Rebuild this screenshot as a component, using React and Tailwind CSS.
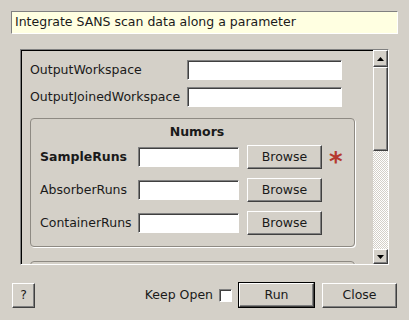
const font = { fontFamily: '"DejaVu Sans", "Liberation Sans", sans-serif' };

const sunken =
  'border border-t-[#808080] border-l-[#808080] border-r-white border-b-white shadow-[inset_1px_1px_0_#404040]';
const raised =
  'border border-t-white border-l-white border-r-[#404040] border-b-[#404040] shadow-[inset_-1px_-1px_0_#808080]';

function TextBox({ w }) {
  return <div className={`${sunken} bg-white h-[20px] ${w}`} />;
}

function Button({ children, className = '' }) {
  return (
    <div className={`${raised} bg-[#d4d0c8] flex items-center justify-center text-[12.5px] text-[#1a1a1a] ${className}`}>
      {children}
    </div>
  );
}

function Arrow({ up }) {
  return (
    <svg width="7" height="4" viewBox="0 0 7 4">
      {up ? <path d="M3.5 0 L7 4 L0 4 Z" fill="#000" /> : <path d="M0 0 L7 0 L3.5 4 Z" fill="#000" />}
    </svg>
  );
}

function RunRow({ label, bold, required }) {
  return (
    <div className="flex items-center h-[24px]">
      <div className={`w-[98px] text-[12.5px] text-[#1a1a1a] ${bold ? 'font-bold' : ''}`}>{label}</div>
      <TextBox w="w-[101px]" />
      <Button className="ml-[8px] w-[75px] h-[24px]">Browse</Button>
      {required && (
        <span className="ml-[7px] text-[26px] leading-none font-bold text-[#b5392f] mt-[10px]">*</span>
      )}
    </div>
  );
}

export default function App() {
  return (
    <div className="w-[409px] h-[320px] bg-[#d4d0c8] flex flex-col overflow-hidden" style={font}>
      {/* description */}
      <div className="mx-[11px] mt-[11px] h-[23px] bg-[#ffffe1] border border-t-[#808080] border-l-[#808080] border-r-white border-b-white flex items-center px-[3px] text-[12.5px] text-[#1a1a1a]">
        Integrate SANS scan data along a parameter
      </div>

      {/* scroll area */}
      <div className="mx-[20px] mt-[15px] h-[216px] flex border border-t-[#808080] border-l-[#808080] border-r-white border-b-white shadow-[inset_1px_1px_0_#000]">
        <div className="flex-1 overflow-hidden pl-[9px] pr-[14px] pt-[10px]">
          <div className="flex flex-col gap-[7px]">
            <div className="flex items-center">
              <div className="w-[157px] text-[12.5px] text-[#1a1a1a]">OutputWorkspace</div>
              <TextBox w="w-[155px]" />
            </div>
            <div className="flex items-center">
              <div className="w-[157px] text-[12.5px] text-[#1a1a1a]">OutputJoinedWorkspace</div>
              <TextBox w="w-[155px]" />
            </div>
          </div>

          <div className="mt-[11px] w-[325px] rounded-[4px] border border-[#8e8a83] shadow-[1px_1px_0_#fff] pl-[9px] pb-[11px]">
            <div className="text-center text-[12.5px] font-bold text-[#1a1a1a] pt-[4px] h-[26px]">Numors</div>
            <div className="flex flex-col gap-[9px]">
              <RunRow label="SampleRuns" bold required />
              <RunRow label="AbsorberRuns" />
              <RunRow label="ContainerRuns" />
            </div>
          </div>

          <div className="mt-[14px] w-[325px] h-[40px] rounded-[4px] border border-[#8e8a83] shadow-[1px_1px_0_#fff]" />
        </div>

        {/* scrollbar */}
        <div className="w-[15px] flex flex-col">
          <div className={`${raised} bg-[#d4d0c8] h-[17px] flex items-center justify-center`}>
            <Arrow up />
          </div>
          <div className={`${raised} bg-[#d4d0c8] h-[84px]`} />
          <div className="flex-1 bg-[repeating-conic-gradient(#ffffff_0_25%,#d4d0c8_0_50%)] bg-[length:2px_2px]" />
          <div className={`${raised} bg-[#d4d0c8] h-[15px] flex items-center justify-center`}>
            <Arrow />
          </div>
        </div>
      </div>

      {/* bottom bar */}
      <div className="mt-[17px] pl-[12px] pr-[12px] flex items-center h-[26px]">
        <Button className="w-[23px] h-[25px]">?</Button>
        <div className="flex-1" />
        <span className="text-[12.5px] text-[#1a1a1a]">Keep Open</span>
        <div className={`${sunken} bg-white w-[13px] h-[13px] ml-[6px]`} />
        <div className="ml-[6px] border border-black">
          <Button className="w-[75px] h-[24px]">Run</Button>
        </div>
        <Button className="ml-[7px] w-[75px] h-[25px]">Close</Button>
      </div>
    </div>
  );
}
